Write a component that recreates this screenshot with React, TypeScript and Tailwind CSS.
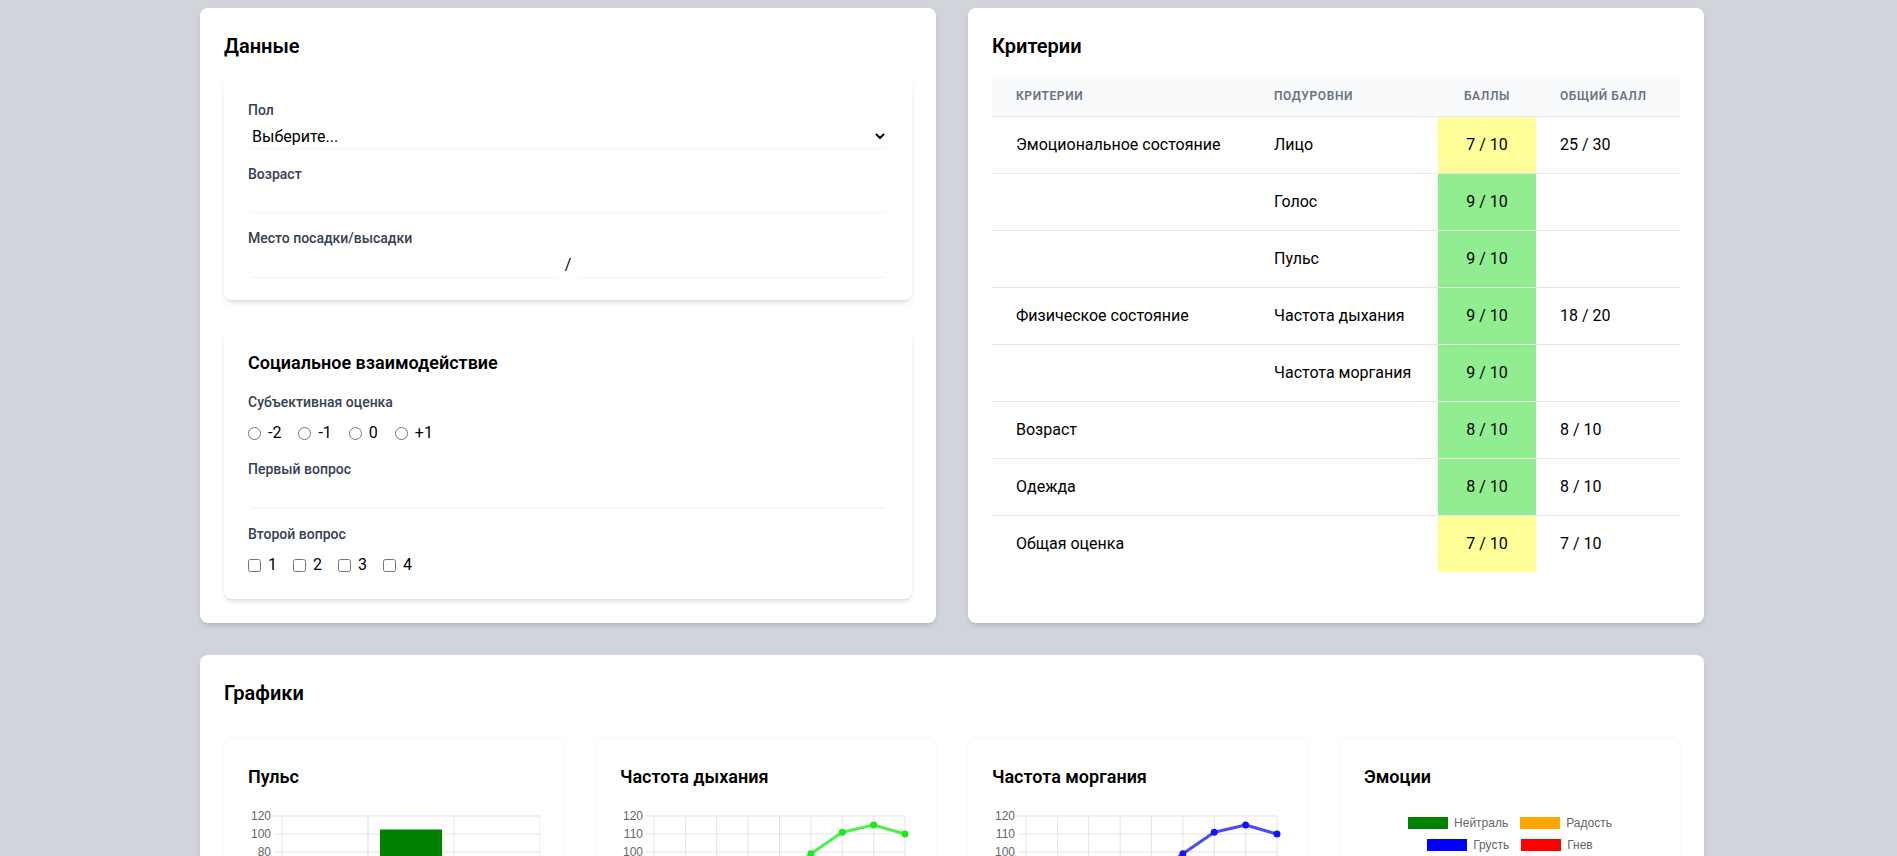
import React from "react";

type Row = {
  crit: string;
  sub: string;
  score: string;
  good: boolean;
  total: string;
};

const rows: Row[] = [
  { crit: "Эмоциональное состояние", sub: "Лицо", score: "7 / 10", good: false, total: "25 / 30" },
  { crit: "", sub: "Голос", score: "9 / 10", good: true, total: "" },
  { crit: "", sub: "Пульс", score: "9 / 10", good: true, total: "" },
  { crit: "Физическое состояние", sub: "Частота дыхания", score: "9 / 10", good: true, total: "18 / 20" },
  { crit: "", sub: "Частота моргания", score: "9 / 10", good: true, total: "" },
  { crit: "Возраст", sub: "", score: "8 / 10", good: true, total: "8 / 10" },
  { crit: "Одежда", sub: "", score: "8 / 10", good: true, total: "8 / 10" },
  { crit: "Общая оценка", sub: "", score: "7 / 10", good: false, total: "7 / 10" },
];

const chartFont = "'Liberation Sans', Arial, sans-serif";

function PulseChart() {
  const top = 9;
  const left = 34;
  const right = 292;
  const y = (v: number) => top + ((120 - v) / 20) * 18;
  const ticks = [120, 100, 80, 60, 40, 20, 0];
  const cols = [34, 120, 206, 292];
  const bars = [62, 105, 58];
  return (
    <svg width={292} height={150} className="block">
      {ticks.map((t) => (
        <g key={t}>
          <line x1={26} x2={right} y1={y(t)} y2={y(t)} stroke="rgba(0,0,0,0.1)" />
          <text x={23} y={y(t) + 4} textAnchor="end" fontSize={12} fill="#666" fontFamily={chartFont}>
            {t}
          </text>
        </g>
      ))}
      {cols.map((c) => (
        <line key={c} x1={c} x2={c} y1={top} y2={y(0) + 8} stroke="rgba(0,0,0,0.1)" />
      ))}
      {bars.map((b, i) => (
        <rect key={i} x={left + i * 86 + 12} y={y(b)} width={62} height={y(0) - y(b)} fill="#008000" />
      ))}
      {["1", "2", "3"].map((l, i) => (
        <text key={l} x={left + i * 86 + 43} y={y(0) + 20} textAnchor="middle" fontSize={12} fill="#666" fontFamily={chartFont}>
          {l}
        </text>
      ))}
    </svg>
  );
}

function LineChart({ values, line, dot }: { values: number[]; line: string; dot: string }) {
  const top = 9;
  const left = 34;
  const right = 285;
  const step = (right - left) / (values.length - 1);
  const y = (v: number) => top + (120 - v) * 1.8;
  const ticks = [120, 110, 100, 90, 80, 70];
  const pts = values.map((v, i) => `${left + i * step},${y(v)}`).join(" ");
  return (
    <svg width={292} height={150} className="block">
      {ticks.map((t) => (
        <g key={t}>
          <line x1={26} x2={right} y1={y(t)} y2={y(t)} stroke="rgba(0,0,0,0.1)" />
          <text x={23} y={y(t) + 4} textAnchor="end" fontSize={12} fill="#666" fontFamily={chartFont}>
            {t}
          </text>
        </g>
      ))}
      {values.map((_, i) => (
        <line key={i} x1={left + i * step} x2={left + i * step} y1={top} y2={y(70) + 8} stroke="rgba(0,0,0,0.1)" />
      ))}
      <polyline points={pts} fill="none" stroke={line} strokeWidth={3} strokeLinejoin="round" />
      {values.map((v, i) => (
        <circle key={i} cx={left + i * step} cy={y(v)} r={3.5} fill={dot} />
      ))}
      {values.map((_, i) => (
        <text key={i} x={left + i * step} y={y(70) + 20} textAnchor="middle" fontSize={12} fill="#666" fontFamily={chartFont}>
          {i + 1}
        </text>
      ))}
    </svg>
  );
}

function LegendItem({ color, label }: { color: string; label: string }) {
  return (
    <div className="flex items-center gap-[6px]">
      <span className={`block w-10 h-3 ${color}`} />
      <span>{label}</span>
    </div>
  );
}

function ChartCard({ title, children }: { title: string; children: React.ReactNode }) {
  return (
    <div className="bg-white rounded-lg shadow-[0_0_3px_rgba(0,0,0,0.08)] p-6 h-[260px]">
      <h3 className="text-lg leading-7 font-semibold text-black">{title}</h3>
      {children}
    </div>
  );
}

export default function App() {
  return (
    <div className="min-h-screen bg-[#d1d5db] pl-[7px] pt-2 pb-8 font-['Roboto',sans-serif] text-black">
      <div className="mx-auto w-[1504px] flex flex-col gap-8">
        <div className="grid grid-cols-2 gap-8">
          {/* Данные */}
          <div className="bg-white rounded-lg shadow-md p-6">
            <h2 className="text-xl leading-7 font-semibold mb-[18px]">Данные</h2>

            <div className="bg-white rounded-lg shadow-md px-6 pt-[22px] pb-[23px] mb-7">
              <label className="block text-sm leading-5 font-medium text-gray-700">Пол</label>
              <select className="mt-[5px] block w-full h-[23px] rounded-md shadow-xs text-base leading-5 bg-white">
                <option>Выберите...</option>
                <option>Мужской</option>
                <option>Женский</option>
              </select>

              <label className="block mt-4 text-sm leading-5 font-medium text-gray-700">Возраст</label>
              <input className="mt-[5px] block w-full h-[23px] rounded-md shadow-xs" />

              <label className="block mt-4 text-sm leading-5 font-medium text-gray-700">Место посадки/высадки</label>
              <div className="mt-[5px] flex items-center gap-1">
                <input className="flex-1 h-[23px] rounded-md shadow-xs" />
                <span className="text-base">/</span>
                <input className="flex-1 h-[23px] rounded-md shadow-xs" />
              </div>
            </div>

            <div className="bg-white rounded-lg shadow-md px-6 pt-6 pb-[22px]">
              <h3 className="text-lg leading-[22px] font-semibold">Социальное взаимодействие</h3>

              <label className="block mt-[18px] text-sm leading-5 font-medium text-gray-700">Субъективная оценка</label>
              <div className="mt-[9px] h-6 flex items-center gap-[17px] text-base">
                {["-2", "-1", "0", "+1"].map((v) => (
                  <label key={v} className="flex items-center gap-[7px]">
                    <input type="radio" name="subj" className="w-[13px] h-[13px]" />
                    <span>{v}</span>
                  </label>
                ))}
              </div>

              <label className="block mt-[14px] text-sm leading-5 font-medium text-gray-700">Первый вопрос</label>
              <input className="mt-[5px] block w-full h-[23px] rounded-md shadow-xs" />

              <label className="block mt-[17px] text-sm leading-5 font-medium text-gray-700">Второй вопрос</label>
              <div className="mt-[9px] h-6 flex items-center gap-4 text-base">
                {["1", "2", "3", "4"].map((v) => (
                  <label key={v} className="flex items-center gap-[7px]">
                    <input type="checkbox" className="w-[13px] h-[13px]" />
                    <span>{v}</span>
                  </label>
                ))}
              </div>
            </div>
          </div>

          {/* Критерии */}
          <div className="bg-white rounded-lg shadow-md p-6">
            <h2 className="text-xl leading-7 font-semibold mb-4">Критерии</h2>
            <table className="w-full table-fixed border-collapse">
              <colgroup>
                <col className="w-[258px]" />
                <col className="w-[188px]" />
                <col className="w-[98px]" />
                <col />
              </colgroup>
              <thead className="bg-gray-50 border-b border-gray-200">
                <tr>
                  <th className="px-6 py-3 text-left text-xs leading-4 font-semibold text-gray-500 uppercase tracking-wider">Критерии</th>
                  <th className="px-6 py-3 text-left text-xs leading-4 font-semibold text-gray-500 uppercase tracking-wider">Подуровни</th>
                  <th className="py-3 text-center text-xs leading-4 font-semibold text-gray-500 uppercase tracking-wider">Баллы</th>
                  <th className="px-6 py-3 text-left text-xs leading-4 font-semibold text-gray-500 uppercase tracking-wider">Общий балл</th>
                </tr>
              </thead>
              <tbody className="divide-y divide-gray-200">
                {rows.map((r, i) => (
                  <tr key={i}>
                    <td className="px-6 py-4 text-base leading-6 whitespace-nowrap">{r.crit}</td>
                    <td className="px-6 py-4 text-base leading-6 whitespace-nowrap">{r.sub}</td>
                    <td className={`py-4 text-base leading-6 text-center ${r.good ? "bg-[#90ee90]" : "bg-[#ffff99]"}`}>{r.score}</td>
                    <td className="px-6 py-4 text-base leading-6">{r.total}</td>
                  </tr>
                ))}
              </tbody>
            </table>
          </div>
        </div>

        {/* Графики */}
        <div className="bg-white rounded-lg shadow-md p-6">
          <h2 className="text-xl leading-7 font-semibold mb-8">Графики</h2>
          <div className="grid grid-cols-4 gap-8">
            <ChartCard title="Пульс">
              <div className="mt-4">
                <PulseChart />
              </div>
            </ChartCard>
            <ChartCard title="Частота дыхания">
              <div className="mt-4">
                <LineChart values={[78, 82, 80, 86, 85, 99, 111, 115, 110]} line="rgba(0,235,0,0.7)" dot="#1ee61e" />
              </div>
            </ChartCard>
            <ChartCard title="Частота моргания">
              <div className="mt-4">
                <LineChart values={[80, 84, 79, 88, 86, 99, 111, 115, 110]} line="rgba(0,0,230,0.7)" dot="#1414ff" />
              </div>
            </ChartCard>
            <ChartCard title="Эмоции">
              <div className="mt-[26px] flex flex-col items-center gap-[10px] text-xs leading-3 text-[#666] font-['Liberation_Sans',Arial,sans-serif]">
                <div className="flex items-center gap-3">
                  <LegendItem color="bg-[#008000]" label="Нейтраль" />
                  <LegendItem color="bg-[#ffa500]" label="Радость" />
                </div>
                <div className="flex items-center gap-3">
                  <LegendItem color="bg-[#0000ff]" label="Грусть" />
                  <LegendItem color="bg-[#ff0000]" label="Гнев" />
                </div>
                <svg width={150} height={150} className="mt-3">
                  <circle cx={75} cy={75} r={70} fill="#008000" />
                  <path d="M75 75 L75 5 A70 70 0 0 1 141 52 Z" fill="#ffa500" />
                  <path d="M75 75 L141 52 A70 70 0 0 1 120 129 Z" fill="#0000ff" />
                  <path d="M75 75 L120 129 A70 70 0 0 1 60 143 Z" fill="#ff0000" />
                </svg>
              </div>
            </ChartCard>
          </div>
        </div>
      </div>
    </div>
  );
}
